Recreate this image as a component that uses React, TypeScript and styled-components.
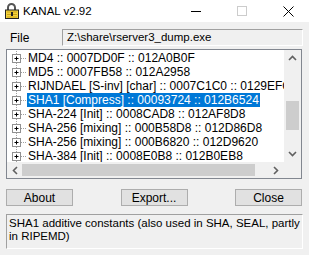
import React from 'react';
import styled, { createGlobalStyle } from 'styled-components';

const GlobalStyle = createGlobalStyle`
  html, body {
    margin: 0;
    padding: 0;
    background: #f0f0f0;
  }
  body {
    font-family: "Liberation Sans", Arial, sans-serif;
  }
`;

type Entry = { text: string; selected?: boolean };

const ENTRIES: Entry[] = [
  { text: 'MD4 :: 0007DD0F :: 012A0B0F' },
  { text: 'MD5 :: 0007FB58 :: 012A2958' },
  { text: 'RIJNDAEL [S-inv] [char] :: 0007C1C0 :: 0129EFC0' },
  { text: 'SHA1 [Compress] :: 00093724 :: 012B6524', selected: true },
  { text: 'SHA-224 [Init] :: 0008CAD8 :: 012AF8D8' },
  { text: 'SHA-256 [mixing] :: 000B58D8 :: 012D86D8' },
  { text: 'SHA-256 [mixing] :: 000B6820 :: 012D9620' },
  { text: 'SHA-384 [Init] :: 0008E0B8 :: 012B0EB8' },
  { text: 'SHA-512 [Init] :: 0008E1E8 :: 012B0FE8' },
];

const LockIcon = () => (
  <svg width="16" height="16" viewBox="0 0 16 16">
    <path d="M4 7 V4.5 A3.5 3.5 0 0 1 11 4.5 V7" fill="none" stroke="#555" strokeWidth="2" />
    <rect x="1.5" y="7" width="13" height="8.5" fill="#f3d23c" stroke="#222" />
    <rect x="3" y="8.5" width="10" height="1" fill="#c9a11a" />
    <rect x="3" y="11" width="10" height="1" fill="#c9a11a" />
    <rect x="3" y="13.5" width="10" height="1" fill="#c9a11a" />
    <rect x="7" y="9" width="2" height="4" fill="#222" />
  </svg>
);

const TreeLines = () => (
  <TreeGlyph width="20" height="14" viewBox="0 0 20 14">
    <line x1="9.5" y1="0" x2="9.5" y2="14" stroke="#a0a0a0" strokeDasharray="1 1" />
    <line x1="14" y1="7.5" x2="20" y2="7.5" stroke="#a0a0a0" strokeDasharray="1 1" />
    <rect x="5.5" y="3.5" width="8" height="8" fill="#fff" stroke="#919191" />
    <line x1="7.5" y1="7.5" x2="11.5" y2="7.5" stroke="#000" />
    <line x1="9.5" y1="5.5" x2="9.5" y2="9.5" stroke="#000" />
  </TreeGlyph>
);

const Chevron = ({ dir }: { dir: 'up' | 'down' | 'left' | 'right' }) => {
  const rot = { up: 0, right: 90, down: 180, left: 270 }[dir];
  return (
    <svg width="9" height="9" viewBox="0 0 9 9">
      <path
        d="M1 6 L4.5 2.5 L8 6"
        fill="none"
        stroke="#606060"
        strokeWidth="1.6"
        transform={`rotate(${rot} 4.5 4.5)`}
      />
    </svg>
  );
};

const App = () => {
  return (
    <>
      <GlobalStyle />
      <Window>
        <TitleBar>
          <AppIcon>
            <LockIcon />
          </AppIcon>
          <Title>KANAL v2.92</Title>
          <Caption>
            <CaptionButton>
              <MinGlyph />
            </CaptionButton>
            <CaptionButton>
              <MaxGlyph />
            </CaptionButton>
            <CaptionButton>
              <svg width="11" height="11" viewBox="0 0 11 11">
                <path d="M0.5 0.5 L10.5 10.5 M10.5 0.5 L0.5 10.5" stroke="#000" strokeWidth="1" />
              </svg>
            </CaptionButton>
          </Caption>
        </TitleBar>
        <Body>
          <FileRow>
            <FileLabel>File</FileLabel>
            <FileField>Z:\share\rserver3_dump.exe</FileField>
          </FileRow>
          <TreeBox>
            <TreeView>
              {ENTRIES.map((e, i) => (
                <TreeRow key={i}>
                  <TreeLines />
                  <RowText selected={e.selected}>{e.text}</RowText>
                </TreeRow>
              ))}
            </TreeView>
            <VScroll>
              <ArrowButton>
                <Chevron dir="up" />
              </ArrowButton>
              <VTrack>
                <VThumb />
              </VTrack>
              <ArrowButton>
                <Chevron dir="down" />
              </ArrowButton>
            </VScroll>
            <HScroll>
              <ArrowButton>
                <Chevron dir="left" />
              </ArrowButton>
              <HTrack>
                <HThumb />
              </HTrack>
              <ArrowButton>
                <Chevron dir="right" />
              </ArrowButton>
            </HScroll>
            <Corner />
          </TreeBox>
          <ButtonRow>
            <PushButton>About</PushButton>
            <PushButton>Export...</PushButton>
            <PushButton>Close</PushButton>
          </ButtonRow>
          <Description>
            {'SHA1 additive constants (also used in SHA, SEAL, partly\nin RIPEMD)'}
          </Description>
        </Body>
      </Window>
    </>
  );
};

export default App;

const Window = styled.div`
  width: 309px;
  height: 255px;
  overflow: hidden;
  background: #f0f0f0;
  display: flex;
  flex-direction: column;
`;

const TitleBar = styled.div`
  height: 22px;
  background: #ffffff;
  display: flex;
  align-items: center;
`;

const AppIcon = styled.div`
  width: 16px;
  height: 16px;
  margin-left: 4px;
  margin-top: -1px;
  display: flex;
`;

const Title = styled.div`
  margin-left: 3px;
  font-size: 11.5px;
  color: #000;
`;

const Caption = styled.div`
  margin-left: auto;
  margin-right: -2px;
  display: flex;
  height: 100%;
`;

const CaptionButton = styled.div`
  width: 46px;
  height: 100%;
  display: flex;
  align-items: center;
  justify-content: center;
`;

const MinGlyph = styled.div`
  width: 10px;
  height: 1px;
  background: #000;
`;

const MaxGlyph = styled.div`
  width: 8px;
  height: 8px;
  border: 1px solid #cccccc;
`;

const Body = styled.div`
  flex: 1;
  padding: 7px 6px 0 6px;
  display: flex;
  flex-direction: column;
`;

const FileRow = styled.div`
  display: flex;
  align-items: center;
  height: 17px;
`;

const FileLabel = styled.div`
  width: 52px;
  padding-left: 4px;
  font-size: 12px;
  color: #000;
`;

const FileField = styled.div`
  flex: 1;
  height: 100%;
  box-sizing: border-box;
  border-top: 1px solid #a0a0a0;
  border-left: 1px solid #a0a0a0;
  border-bottom: 1px solid #ffffff;
  border-right: 1px solid #ffffff;
  padding-left: 4px;
  font-size: 11.5px;
  line-height: 15px;
  color: #000;
  white-space: nowrap;
`;

const TreeBox = styled.div`
  margin-top: 3px;
  height: 130px;
  box-sizing: border-box;
  border: 1px solid #828790;
  margin-right: 1px;
  display: grid;
  grid-template-columns: 1fr 17px;
  grid-template-rows: 1fr 16px;
  background: #ffffff;
`;

const TreeView = styled.div`
  overflow: hidden;
  padding-top: 1px;
  background: #ffffff;
`;

const TreeRow = styled.div`
  height: 14px;
  display: flex;
  align-items: center;
  white-space: nowrap;
`;

const TreeGlyph = styled.svg`
  flex: none;
`;

const RowText = styled.span<{ selected?: boolean }>`
  padding: 0 1px;
  height: 14px;
  line-height: 14px;
  font-size: 12px;
  color: ${(p) => (p.selected ? '#ffffff' : '#000000')};
  background: ${(p) => (p.selected ? '#0078d7' : 'transparent')};
`;

const VScroll = styled.div`
  background: #f0f0f0;
  display: flex;
  flex-direction: column;
`;

const HScroll = styled.div`
  background: #f0f0f0;
  display: flex;
`;

const Corner = styled.div`
  background: #f0f0f0;
`;

const ArrowButton = styled.div`
  width: 17px;
  height: 17px;
  flex: none;
  display: flex;
  align-items: center;
  justify-content: center;
`;

const VTrack = styled.div`
  flex: 1;
  position: relative;
`;

const VThumb = styled.div`
  position: absolute;
  left: 2px;
  right: 2px;
  top: 34px;
  height: 29px;
  background: #cdcdcd;
`;

const HTrack = styled.div`
  flex: 1;
  position: relative;
`;

const HThumb = styled.div`
  position: absolute;
  top: 2px;
  bottom: 2px;
  left: -2px;
  width: 233px;
  background: #cdcdcd;
`;

const ButtonRow = styled.div`
  margin-top: 10px;
  height: 17px;
  display: flex;
  justify-content: space-between;
  padding-right: 1px;
`;

const PushButton = styled.div`
  width: 67px;
  height: 17px;
  box-sizing: border-box;
  border: 1px solid #adadad;
  background: #e1e1e1;
  display: flex;
  align-items: center;
  justify-content: center;
  font-size: 12px;
  color: #000;
`;

const Description = styled.div`
  margin-top: 8px;
  height: 35px;
  box-sizing: border-box;
  border-top: 1px solid #a0a0a0;
  border-left: 1px solid #a0a0a0;
  border-bottom: 1px solid #ffffff;
  border-right: 1px solid #ffffff;
  padding: 2px 1px 0 2px;
  font-size: 11.5px;
  line-height: 13px;
  color: #000;
  white-space: pre;
  overflow: hidden;
`;
